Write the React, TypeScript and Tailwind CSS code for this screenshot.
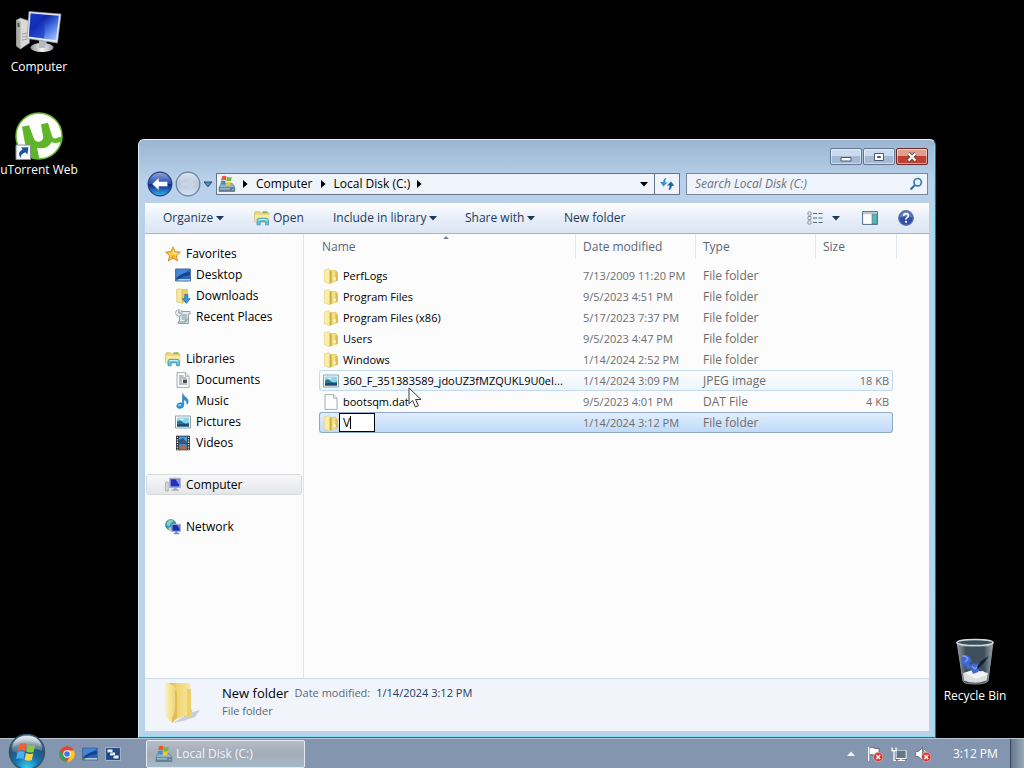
import type { ReactNode } from "react";

/* ---------- Icons ---------- */

function FolderIcon() {
  return (
    <svg viewBox="0 0 16 16" className="size-4" aria-hidden="true">
      <path d="M7 2.5 12.8 1.8 14.8 4.5V12.8L8 15.2Z" fill="#e6cd62" />
      <path d="M8.6 3.2 12.4 2.2V9.4L14.8 10.4V12.8L8.6 15Z" fill="#f3e084" />
      <path d="M12.6 4.2 14.8 5V12.6L12.6 13.4Z" fill="#d8bd58" />
      <path d="M1.2 2 5.4.6 8 2.2V15.4L6.4 15.8 1.4 13.8Z" fill="#f2e18d" />
      <path d="M1.2 2 5.4.6 6.6 2.6V15.8L1.4 13.8Z" fill="#f8edaa" stroke="#dcc671" strokeWidth=".4" />
      <path d="M6.8 2.4V15.6L8.6 15V2.6Z" fill="#cfae40" />
      <path d="M10.6 9.4h2V12h-2Z" fill="#fff8d0" />
    </svg>
  );
}

function BigFolderIcon() {
  return (
    <svg viewBox="0 0 40 44" className="mb-1 h-11 w-10" aria-hidden="true">
      <defs>
        <linearGradient id="bf1" x1="0" x2="1">
          <stop offset="0" stopColor="#fbf1bd" />
          <stop offset="1" stopColor="#eed475" />
        </linearGradient>
        <linearGradient id="bf2" x1="0" x2="1">
          <stop offset="0" stopColor="#d7b342" />
          <stop offset=".4" stopColor="#efd673" />
          <stop offset="1" stopColor="#f7e69a" />
        </linearGradient>
      </defs>
      <path d="M28 32 39 29 34 36 22 40 12 42Z" fill="#c9ced8" />
      <path d="M8 2H27L29 4V33L12 39Z" fill="url(#bf2)" />
      <path d="M26 8H30V28L31 29V35L26 37Z" fill="#ebd06c" />
      <path d="M4 3 6 1 13 5Q15 7 15 11V37L11 42 4 35Z" fill="url(#bf1)" />
      <path d="M14 9 16 11V37L11 42V37Q14 32 14 26Z" fill="#dfbe56" />
    </svg>
  );
}

function LibraryIcon() {
  return (
    <svg viewBox="0 0 16 16" className="size-4" aria-hidden="true">
      <path d="M.7 3 1 1.8H5.5L6.6 3H14.8V12H.7Z" fill="#f0d777" stroke="#c6a744" strokeWidth=".6" />
      <path d="M8.5 1.3h5V3h-5Z" fill="#79b95a" />
      <path d="M1 4.8H15V12H1Z" fill="#f9eaa0" />
      <path d="M3 14.8V10.5Q3 8.3 5 8.3H12Q14.5 8.3 14.5 10.5V14.8H11.5V11.5H6.2V14.8Z" fill="#62c5df" stroke="#318eb9" strokeWidth=".7" />
      <path d="M4 10Q8 8.8 13.5 10" stroke="#d1f4fb" fill="none" />
    </svg>
  );
}

function StarIcon() {
  return (
    <svg viewBox="0 0 16 16" className="size-4" aria-hidden="true">
      <path d="m8 .8 2.1 4.8 5.2.5-3.9 3.5 1.1 5.3L8 12.2 3.4 15l1.2-5.3L.7 6.1l5.2-.5Z" fill="#f9c84c" stroke="#d48324" strokeWidth=".9" />
      <path d="m8 2.4.9 4.3 4.3.2-5 1.5Z" fill="#fff3bd" />
      <path d="M8 8.5 5 13l3-1.8 3 1.8Z" fill="#f2a029" />
    </svg>
  );
}

function DesktopIcon() {
  return (
    <svg viewBox="0 0 16 16" className="size-4" aria-hidden="true">
      <path d="M.6 2h14.8v12H.6Z" fill="#2667bb" stroke="#4a6a94" />
      <path d="M1.2 2.6H15L1.2 11Z" fill="#4585d6" />
      <path d="M1.2 11.5Q6 6 14.8 5V8Q7 9 4 12Z" fill="#173f8f" />
      <path d="M1 12h14v1.6H1Z" fill="#b9cbdb" />
      <path d="M1 12h2.2v1.6H1Z" fill="#3a8c4b" />
    </svg>
  );
}

function DownloadsIcon() {
  return (
    <svg viewBox="0 0 16 16" className="size-4" aria-hidden="true">
      <path d="M1.5 1.5 5.5.7 8 2V15.3L1.8 14Z" fill="#f8e99c" stroke="#cfae4c" strokeWidth=".5" />
      <path d="M7 1.5h5.6V13L7 14.8Z" fill="#e8cd67" stroke="#cfae4c" strokeWidth=".5" />
      <path d="M9.8 6.5h3v4.2h2.4L11.3 15.4 7.4 10.7h2.4Z" fill="#3e96e5" stroke="#1764ad" strokeWidth=".7" />
    </svg>
  );
}

function RecentIcon() {
  return (
    <svg viewBox="0 0 16 16" className="size-4" aria-hidden="true">
      <path d="M4.5 2.5H15V5h-1.5v9.5H3.2Q2.3 12.6 4.5 12Z" fill="#e4ecee" stroke="#7e8b91" strokeWidth=".8" />
      <path d="M6.5 6h5.5M6.5 8h5.5M6.5 10h5.5M3.5 13h8" stroke="#5f8188" strokeWidth=".8" />
      <circle cx="3.8" cy="3.9" r="3.2" fill="#f0f3f4" stroke="#8c989c" strokeWidth=".8" />
      <path d="M3.8 1.8v2.3h2" stroke="#4e5c66" strokeWidth=".7" fill="none" />
      <path d="m9 12 4-3-1 4Z" fill="#71b6ad" />
    </svg>
  );
}

function PageIcon({ plain = false }: { plain?: boolean }) {
  return (
    <svg viewBox="0 0 16 16" className="size-4" aria-hidden="true">
      <path d="M2 .6H10.5L14 4.2V15.4H2Z" fill="#fdfdfd" stroke="#8f979d" strokeWidth=".8" />
      <path d="M10.5.6V4.2H14" fill="#e9edf0" stroke="#8f979d" strokeWidth=".7" />
      {!plain && (
        <>
          <path d="M4 4h4.5M4 6h7.5M4 8h3M4 10h3M4 12h8" stroke="#66747d" strokeWidth=".9" />
          <path d="M8 7.5h4V11H8Z" fill="#45515a" />
        </>
      )}
    </svg>
  );
}

function MusicIcon() {
  return (
    <svg viewBox="0 0 16 16" className="size-4" aria-hidden="true">
      <path d="M7.6.4C8.2 3 12.8 4.5 13.2 8q.1 1.8-1.2 3.5.4-3.6-3.2-5v5.3q0 3-3.5 3.6-3.6.2-3.6-2.4.2-2.8 3.5-3.2 1.2-.1 2.2.4Z" fill="#2a91ce" stroke="#1a6ea9" strokeWidth=".5" />
      <ellipse cx="4.7" cy="12.1" rx="1.8" ry="1.2" fill="#85cdf0" />
    </svg>
  );
}

function PictureIcon() {
  return (
    <svg viewBox="0 0 16 16" className="size-4" aria-hidden="true">
      <path d="M.5 2h15v12H.5Z" fill="#fff" stroke="#87939c" strokeWidth=".9" />
      <path d="M2 3.5h12v9H2Z" fill="#8dd3ea" />
      <path d="M2 7.5Q5 5.5 7.5 8T14 8.5V12.5H2Z" fill="#257b8b" />
      <path d="M2 10.6Q8 9 14 10.3V12.5H2Z" fill="#1c4b75" />
      <path d="M3 4.8h7l-3 1.5Z" fill="#e5f8fc" />
    </svg>
  );
}

function VideoIcon() {
  return (
    <svg viewBox="0 0 16 16" className="size-4" aria-hidden="true">
      <path d="M1 .7h14v14.6H1Z" fill="#202a33" />
      <path d="M4 1.5h8v6H4Z" fill="#579bd3" />
      <path d="M4 8.5h8v6H4Z" fill="#4484c2" />
      <path d="m4 5 4-2 4 4.5H4Z" fill="#2b5b94" />
      <path d="m4 14.5 5-5.4 3 3v2.4Z" fill="#b46a47" />
      <path d="M2.5 1.8v13M13.5 1.8v13" stroke="#e9eef1" strokeWidth="1.5" strokeDasharray="1.3 1.1" />
    </svg>
  );
}

function ComputerSmallIcon() {
  return (
    <svg viewBox="0 0 16 16" className="size-4" aria-hidden="true">
      <path d="M.5 5h2.7v9H.5Z" fill="#d9dcdf" stroke="#8d9297" strokeWidth=".6" />
      <path d="M4.6 1.2h10.8v9.3H4.6Z" fill="#b9c1dd" stroke="#8990ad" strokeWidth=".6" />
      <path d="M5.6 2.2h8.8v7.3H5.6Z" fill="#2330c0" />
      <path d="M10.5 2.2h3.9v6Z" fill="#8d9cf2" />
      <path d="M8.7 10.6h3v2h2v1.2H6.5v-1.2h2.2Z" fill="#a4a9b6" />
    </svg>
  );
}

function NetworkIcon() {
  return (
    <svg viewBox="0 0 16 16" className="size-4" aria-hidden="true">
      <circle cx="5.8" cy="5.8" r="5.3" fill="#3695cb" stroke="#2a7193" strokeWidth=".6" />
      <path d="M1.5 4Q4 0 7.5 1L8 3 5.5 4 5 6.5 2.5 7Z" fill="#8fd6a0" />
      <path d="m3 9 3-1 1 2.7-2.6.2Z" fill="#a6dda0" />
      <path d="M6.6 5.2h9v7.4h-9Z" fill="#c2cbe4" stroke="#7884a4" strokeWidth=".5" />
      <path d="M7.4 6h7.4v5.8H7.4Z" fill="#1730b4" />
      <path d="M12 6h2.8v4.4Z" fill="#6a82eb" />
      <path d="M10.2 12.6h2.4v1.5h1.6v1.2H8.7v-1.2h1.5Z" fill="#5d92bd" />
    </svg>
  );
}

function DriveIcon() {
  return (
    <svg viewBox="0 0 18 18" className="size-[18px]" aria-hidden="true">
      <path d="m2.5 10 1-1.5h10.8l2.5 3.5v4.5H1V12Z" fill="#91b1c0" stroke="#52717f" strokeWidth=".6" />
      <path d="M1 12.3h15.8v4.2H1Z" fill="#5d7f91" />
      <path d="M2 13.3h10v1.2H2Z" fill="#a8c9d7" />
      <path d="M14 14h1.5v1.3H14Z" fill="#72e36f" />
      <path d="M4 1.4Q6.4.2 8.6 1.5L7.9 5.5Q5.6 4.3 3.2 5.3Z" fill="#e8592b" />
      <path d="M9.2 1.8q2.2 1.3 4.6.3l-.8 3.7q-2.3 1-4.5-.1Z" fill="#6dbb3d" />
      <path d="M3 5.9q2.4-1 4.7.2L7 9.9q-2.1-1-4.6-.2Z" fill="#3f91d6" />
      <path d="M8.4 6.5q2.1 1.2 4.5.2l-.8 3.7q-2.2.8-4.4-.2Z" fill="#f6c62e" />
    </svg>
  );
}

function SmallArrow({ dir = "down" }: { dir?: "down" | "right" }) {
  return dir === "down" ? (
    <svg viewBox="0 0 8 5" className="h-[5px] w-2 shrink-0" aria-hidden="true">
      <path d="M0 0h8L4 4.6Z" fill="currentColor" />
    </svg>
  ) : (
    <svg viewBox="0 0 5 8" className="h-2 w-[5px] shrink-0" aria-hidden="true">
      <path d="M0 0v8l4.6-4Z" fill="currentColor" />
    </svg>
  );
}

function DesktopComputer() {
  return (
    <svg viewBox="0 0 48 48" className="size-12" aria-hidden="true">
      <defs>
        <linearGradient id="scr" x1="0" y1="0" x2=".9" y2="1">
          <stop offset="0" stopColor="#164fd5" />
          <stop offset=".35" stopColor="#1225a9" />
          <stop offset=".6" stopColor="#3a66dd" />
          <stop offset="1" stopColor="#a9c6ff" />
        </linearGradient>
        <linearGradient id="stand" x1="0" x2="1">
          <stop offset="0" stopColor="#8e9297" />
          <stop offset=".5" stopColor="#f3f4f5" />
          <stop offset="1" stopColor="#999da3" />
        </linearGradient>
      </defs>
      <path d="m1.5 11 4-2 9 3v22l-9 6-4-3Z" fill="#d9dad7" stroke="#84877f" strokeWidth=".7" />
      <path d="m1.5 11 4 1v28l-4-3Z" fill="#aaada8" />
      <path d="M2.5 14h2v4h-2Z" fill="#4e5352" />
      <path d="m7 25 5-1m-5 4 5-1m-5 4 5-1" stroke="#888" strokeWidth=".7" />
      <ellipse cx="27" cy="38.5" rx="11.5" ry="4.5" fill="url(#stand)" />
      <path d="m24 31 8 1-2 7h-6Z" fill="#b6bac0" />
      <path d="M14 2.5 46 5 42.5 34 12 29.5Z" fill="#e5e8ee" stroke="#8b929e" strokeWidth=".7" />
      <path d="M15.7 4.5 43.9 6.7 41 31.3 13.9 27.5Z" fill="url(#scr)" />
      <path d="M15.7 4.5 26 5.3Q31 16 29 29.5L13.9 27.5Z" fill="#1430be" opacity=".6" />
    </svg>
  );
}

function UTorrentIcon() {
  return (
    <svg viewBox="0 0 48 48" className="size-12" aria-hidden="true">
      <circle cx="24" cy="24" r="23" fill="#fff" stroke="#69b92e" strokeWidth="1.5" />
      <path d="M7 14.8 14 13.2 19 27Q21 31 25 29.4 29.5 27.7 27.7 22.5L26 12.3 33 10.7 37 24Q38.3 27.5 42 26L45.5 24.5 47 29Q42 32.3 36.5 30.2 33 36.5 26 36.3L22 35.7 24.5 47Q17 47 12.2 43.5Z" fill="#5db527" />
      <path d="M1 33h14.5v14.5H1Z" fill="#f8f9fb" stroke="#8a949b" />
      <path d="M5.5 46.2Q1.6 40.5 7.6 37.6L6 35.4 13.4 35.2 12.4 42.4 10.4 40.2Q5.6 41.6 5.5 46.2Z" fill="#15559c" />
    </svg>
  );
}

function RecycleBinIcon() {
  return (
    <svg viewBox="0 0 40 48" className="h-12 w-10" aria-hidden="true">
      <defs>
        <linearGradient id="glass" x1="0" x2="1">
          <stop offset="0" stopColor="#b7c4cc" stopOpacity=".8" />
          <stop offset=".25" stopColor="#4d626f" stopOpacity=".8" />
          <stop offset=".75" stopColor="#506370" stopOpacity=".8" />
          <stop offset="1" stopColor="#c8d4da" stopOpacity=".8" />
        </linearGradient>
      </defs>
      <path d="M2 4H38L33 43Q31 46 20 46T8 43Z" fill="url(#glass)" stroke="#87949b" />
      <ellipse cx="20" cy="4.5" rx="18" ry="3.1" fill="#3d4e58" stroke="#d4dfe2" strokeWidth="1.5" />
      <path d="M8 35Q20 30 33 35L31.5 42.5Q20 47 9 42.5Z" fill="#d9dddc" />
      <path d="m10 35 7-3 5 3 6-2 4 4-11 4Z" fill="#f1f3f2" />
      <path d="M6 20q5-5 9-1l2 5-3 1 3 4-4 3-4-6-2 1ZM15 29l3-4 3 1 3-1 1 4-2 5-5 2Z" fill="#4168d0" />
      <path d="M7 18q4-1 6 3l-3 3M17 28l3 3 3-3" stroke="#83a3f2" strokeWidth="1.2" fill="none" />
      <path d="m22 29 4-6 8-5-6 8-5 5Z" fill="#101d38" />
      <path d="M6 8h28" stroke="#c7d6dd" opacity=".4" />
    </svg>
  );
}

function StartOrb() {
  return (
    <svg viewBox="0 0 38 38" className="size-[38px]" aria-hidden="true">
      <defs>
        <radialGradient id="orb" cx=".5" cy=".95" r=".9">
          <stop offset="0" stopColor="#35d0f2" />
          <stop offset=".4" stopColor="#1672ad" />
          <stop offset=".75" stopColor="#285070" />
          <stop offset="1" stopColor="#a5b7c4" />
        </radialGradient>
        <linearGradient id="shine" x1="0" x2="0" y1="0" y2="1">
          <stop offset="0" stopColor="#fff" stopOpacity=".75" />
          <stop offset="1" stopColor="#fff" stopOpacity=".1" />
        </linearGradient>
      </defs>
      <circle cx="19" cy="19" r="17.5" fill="url(#orb)" stroke="#34536e" strokeWidth="1.5" />
      <path d="M4 18Q4 3 19 3t15 15Q26 14 19 18T4 18Z" fill="url(#shine)" />
      <path d="M11.5 10.8q3.8-2 7.1.4l-1.5 7q-3.6-2-7.3-.3Z" fill="#ed6133" />
      <path d="M19.8 11.6q3.7 2 7.3.2l-1.5 7.1q-3.6 1.6-7.3-.4Z" fill="#8bca3c" />
      <path d="M9.6 19.1q3.7-1.9 7.2.4l-1.5 6.8q-3.5-2-7.2-.3Z" fill="#4ab1ec" />
      <path d="M18 20q3.5 2 7.3.4l-1.5 6.7q-3.6 1.7-7.2-.4Z" fill="#fad443" />
    </svg>
  );
}

function ChromeIcon() {
  return (
    <svg viewBox="0 0 16 16" className="size-4" aria-hidden="true">
      <circle cx="8" cy="8" r="7.8" fill="#e2443a" />
      <path d="M1.2 4.2 5 10l2.8 5.8A7.8 7.8 0 0 1 1.2 4.2Z" fill="#32a350" />
      <path d="M8 4.5h7A7.8 7.8 0 0 1 7.8 15.8L11.2 10Z" fill="#fbcb2c" />
      <circle cx="8" cy="8" r="3.7" fill="#fff" />
      <circle cx="8" cy="8" r="2.8" fill="#3978df" />
    </svg>
  );
}

function SwitchIcon() {
  return (
    <svg viewBox="0 0 16 16" className="size-4" aria-hidden="true">
      <path d="M.6 1.6h14.8v12.8H.6Z" fill="#214b87" stroke="#d9e5f1" strokeWidth=".6" />
      <path d="M2 3.5h6V7H2ZM4.5 6.5h6V10h-6ZM8 9.5h6V13H8Z" fill="#dceaf8" stroke="#153662" strokeWidth=".8" />
      <path d="M2.5 4h5M5 7h5M8.5 10h5" stroke="#fff" />
    </svg>
  );
}

function ErrorBadge() {
  return (
    <>
      <circle cx="11.2" cy="11" r="4.7" fill="#d83a32" stroke="#f0c2be" strokeWidth=".6" />
      <path d="m9.3 9.1 3.8 3.8m0-3.8-3.8 3.8" stroke="#fff" strokeWidth="1.4" />
    </>
  );
}

/* ---------- Data ---------- */

type NavItem = { label: string; icon: ReactNode };
type NavGroup = NavItem & { children: NavItem[]; current?: boolean };

const groups: NavGroup[] = [
  {
    label: "Favorites",
    icon: <StarIcon />,
    children: [
      { label: "Desktop", icon: <DesktopIcon /> },
      { label: "Downloads", icon: <DownloadsIcon /> },
      { label: "Recent Places", icon: <RecentIcon /> },
    ],
  },
  {
    label: "Libraries",
    icon: <LibraryIcon />,
    children: [
      { label: "Documents", icon: <PageIcon /> },
      { label: "Music", icon: <MusicIcon /> },
      { label: "Pictures", icon: <PictureIcon /> },
      { label: "Videos", icon: <VideoIcon /> },
    ],
  },
  { label: "Computer", icon: <ComputerSmallIcon />, children: [], current: true },
  { label: "Network", icon: <NetworkIcon />, children: [] },
];

type FileRow = {
  name: string;
  date: string;
  type: string;
  size?: string;
  icon: ReactNode;
  state?: "hover" | "editing";
};

const files: FileRow[] = [
  { name: "PerfLogs", date: "7/13/2009 11:20 PM", type: "File folder", icon: <FolderIcon /> },
  { name: "Program Files", date: "9/5/2023 4:51 PM", type: "File folder", icon: <FolderIcon /> },
  { name: "Program Files (x86)", date: "5/17/2023 7:37 PM", type: "File folder", icon: <FolderIcon /> },
  { name: "Users", date: "9/5/2023 4:47 PM", type: "File folder", icon: <FolderIcon /> },
  { name: "Windows", date: "1/14/2024 2:52 PM", type: "File folder", icon: <FolderIcon /> },
  { name: "360_F_351383589_jdoUZ3fMZQUKL9U0eI...", date: "1/14/2024 3:09 PM", type: "JPEG image", size: "18 KB", icon: <PictureIcon />, state: "hover" },
  { name: "bootsqm.dat", date: "9/5/2023 4:01 PM", type: "DAT File", size: "4 KB", icon: <PageIcon plain /> },
  { name: "V", date: "1/14/2024 3:12 PM", type: "File folder", icon: <FolderIcon />, state: "editing" },
];

/* ---------- Window parts ---------- */

function CaptionButtons() {
  const plain = "border-[#5f7592] bg-linear-to-b from-[#cbdaec] from-50% to-[#a3bad6] to-50%";
  const base = "flex h-[17px] w-8 items-center justify-center rounded-[2px] border shadow-[inset_0_0_0_1px_rgba(255,255,255,0.5)]";
  return (
    <div className="flex gap-px">
      <button aria-label="Minimize" className={`${base} ${plain}`}>
        <svg viewBox="0 0 12 10" className="h-2.5 w-3"><path d="M1 5.5h10v3.5H1Z" fill="#fff" stroke="#4d5a6d" /></svg>
      </button>
      <button aria-label="Restore" className={`${base} ${plain}`}>
        <svg viewBox="0 0 12 10" className="h-2.5 w-3"><path d="M1.5 1.5h9v7h-9Z" fill="#fff" stroke="#4d5a6d" /><path d="M4.5 4.5h3v1h-3Z" fill="#b8c9dd" stroke="#4d5a6d" /></svg>
      </button>
      <button aria-label="Close" className={`${base} border-[#6b2a28] bg-linear-to-b from-[#e0a08f] from-45% to-[#bd4030] to-50%`}>
        <svg viewBox="0 0 12 10" className="h-2.5 w-3"><path d="m2.5 1.5 7 7m0-7-7 7" stroke="#63434a" strokeWidth="4" /><path d="m2.5 1.5 7 7m0-7-7 7" stroke="#fff" strokeWidth="2.2" /></svg>
      </button>
    </div>
  );
}

function NavigationBar() {
  return (
    <div className="flex h-[26px] items-center pr-px pl-[2px]">
      <button aria-label="Back">
        <svg viewBox="0 0 26 26" className="size-[26px]">
          <defs>
            <linearGradient id="back" x1="0" x2="0" y1="0" y2="1">
              <stop offset="0" stopColor="#8ea7dc" />
              <stop offset=".48" stopColor="#2d4fae" />
              <stop offset=".5" stopColor="#0a2388" />
              <stop offset="1" stopColor="#36b4ee" />
            </linearGradient>
          </defs>
          <circle cx="13" cy="13" r="11.8" fill="url(#back)" stroke="#24417e" strokeWidth="1.3" />
          <path d="m5 13 7-6.4v3.9h8.6v5H12v3.9Z" fill="#fff" stroke="#3c599a" strokeWidth=".5" />
        </svg>
      </button>
      <button aria-label="Forward" className="ml-[2px]">
        <svg viewBox="0 0 26 26" className="size-[26px]">
          <defs>
            <linearGradient id="fwd" x1="0" x2="0" y1="0" y2="1">
              <stop offset="0" stopColor="#dce5ee" />
              <stop offset=".5" stopColor="#b7c8dc" />
              <stop offset="1" stopColor="#d4e5f5" />
            </linearGradient>
          </defs>
          <circle cx="13" cy="13" r="11.8" fill="url(#fwd)" stroke="#687e99" strokeWidth="1.2" />
          <path d="m21 13-7-6v3.8H6v4.4h8V19Z" fill="#c7d4e2" />
        </svg>
      </button>
      <button aria-label="Recent pages" className="ml-px flex w-[11px] justify-center">
        <svg viewBox="0 0 10 7" className="h-[7px] w-2.5"><path d="M1 1h8L5 5.8Z" fill="#4c8fbe" stroke="#264c74" /></svg>
      </button>
      <div className="ml-[3px] flex h-[22px] min-w-0 flex-1 border border-[#65758a] bg-[#eff3fb] text-black">
        <div className="flex min-w-0 flex-1 items-center pl-px">
          <DriveIcon />
          <span className="ml-[7px]"><SmallArrow dir="right" /></span>
          <button className="ml-2">Computer</button>
          <span className="ml-2"><SmallArrow dir="right" /></span>
          <button className="ml-2">Local Disk (C:)</button>
          <span className="ml-[7px]"><SmallArrow dir="right" /></span>
          <button aria-label="Previous locations" className="mr-1.5 ml-auto"><SmallArrow /></button>
        </div>
        <button aria-label="Refresh" className="flex w-[25px] items-center justify-center border-l border-[#65758a]">
          <svg viewBox="0 0 16 14" className="h-3.5 w-4">
            <path d="M7.4 1Q4.6 1.2 4.2 5H1.2L4.4 9.6 8.6 5.6H6.2Q6.2 2.6 7.4 1Z" fill="#3f8dc6" />
            <path d="M9.6 13.2q2.9-.4 3.2-4.4h2.6L12 4.4 8 8.4h2.4q.2 3-.8 4.8Z" fill="#23649d" />
          </svg>
        </button>
      </div>
      <div className="ml-1.5 flex h-[22px] w-[242px] items-center border border-[#77899f] bg-[#eff3fb] pr-1">
        <input aria-label="Search Local Disk (C:)" placeholder="Search Local Disk (C:)" className="min-w-0 flex-1 bg-transparent pl-2 text-[12px] italic outline-none placeholder:text-[#6d717b]" />
        <svg viewBox="0 0 14 14" className="size-3.5" aria-hidden="true">
          <path d="m1.5 12.5 5-5" stroke="#366ea0" strokeWidth="2.2" />
          <circle cx="8.7" cy="5.2" r="3.7" fill="#e7f3fb" stroke="#3b79b2" strokeWidth="1.7" />
        </svg>
      </div>
    </div>
  );
}

function Toolbar() {
  return (
    <div className="flex h-[31px] items-center border-b border-[#a6b3c7] bg-linear-to-b from-[#fdfeff] via-[#e8eff9] via-50% to-[#dbe5f3] pr-[15px] pl-[18px] text-[#1e395b]">
      <button className="flex w-[91px] items-center gap-[3px]">Organize <SmallArrow /></button>
      <button className="flex w-[79px] items-center gap-[3px]"><LibraryIcon />Open</button>
      <button className="flex w-[132px] items-center gap-[3px]">Include in library <SmallArrow /></button>
      <button className="flex w-[99px] items-center gap-[3px]">Share with <SmallArrow /></button>
      <button>New folder</button>
      <button aria-label="Change your view" className="ml-auto">
        <svg viewBox="0 0 16 14" className="h-3.5 w-4">
          <path d="M1 1h3v3H1ZM1 5.5h3v3H1ZM1 10h3v3H1Z" fill="#fff" stroke="#6c7e90" strokeWidth=".8" />
          <path d="M6 2.5h4M6 7h4M6 11.5h4M11.5 2.5h4M11.5 7h4M11.5 11.5h4" stroke="#52687c" strokeWidth="1.1" />
        </svg>
      </button>
      <button aria-label="View options" className="ml-[9px]"><SmallArrow /></button>
      <button aria-label="Preview pane" className="ml-[22px]">
        <svg viewBox="0 0 16 14" className="h-3.5 w-4">
          <path d="M.6.6h14.8v12.8H.6Z" fill="#fff" stroke="#4f6f83" />
          <path d="M1 1h14v2.3H1Z" fill="#b9cad7" />
          <path d="M10 3.3h5V13h-5Z" fill="#59b8b5" stroke="#4f6f83" strokeWidth=".6" />
        </svg>
      </button>
      <button aria-label="Help" className="ml-5">
        <svg viewBox="0 0 16 16" className="size-4">
          <circle cx="8" cy="8" r="7.4" fill="#304fab" stroke="#6b7fae" strokeWidth="1.1" />
          <path d="M2 7.5a6 6 0 0 1 12 0Q8 5.5 2 7.5Z" fill="#8296d4" opacity=".7" />
          <path d="M5.7 6Q5.8 3.7 8 3.7q2.3.1 2.3 2 0 1.3-1.3 2T8 9.5" stroke="#fff" strokeWidth="1.7" fill="none" />
          <circle cx="8" cy="11.8" r="1.1" fill="#fff" />
        </svg>
      </button>
    </div>
  );
}

function NavigationPane() {
  return (
    <nav aria-label="Places" className="w-[159px] shrink-0 border-r border-[#dbe4f0] pt-[9px]">
      <ul className="flex flex-col gap-[21px]">
        {groups.map((g) => (
          <li key={g.label}>
            <a
              href="#"
              className={
                g.current
                  ? "mx-px flex h-[21px] items-center gap-[5px] rounded-[3px] border border-[#d5dade] bg-linear-to-b from-[#f8f8f9] to-[#e5e6e8] pl-[18px]"
                  : "mx-px flex h-[21px] items-center gap-[5px] pl-[19px]"
              }
            >
              {g.icon}
              {g.label}
            </a>
            {g.children.map((c) => (
              <a key={c.label} href="#" className="flex h-[21px] items-center gap-[5px] pl-[30px]">
                {c.icon}
                {c.label}
              </a>
            ))}
          </li>
        ))}
      </ul>
    </nav>
  );
}

function cellStyle(state: FileRow["state"]) {
  if (state === "hover") return "border-y border-[#c3dbee] bg-linear-to-b from-[#fbfdff] to-[#ecf4fb] first:border-l last:border-r first:rounded-l-[3px] last:rounded-r-[3px]";
  if (state === "editing") return "border-y border-[#8fa9cb] bg-linear-to-b from-[#e2eefd] to-[#c0daf9] first:border-l last:border-r first:rounded-l-[3px] last:rounded-r-[3px]";
  return "border-y border-transparent first:border-l last:border-r";
}

function FileList() {
  return (
    <div className="min-w-0 flex-1 pl-[15px]">
      <table className="w-[574px] table-fixed border-separate border-spacing-0 text-left">
        <colgroup>
          <col className="w-[257px]" />
          <col className="w-[120px]" />
          <col className="w-[120px]" />
          <col />
        </colgroup>
        <thead className="text-[#5b6676]">
          <tr className="h-[31px] align-top">
            <th className="relative p-0 font-normal">
              <div className="flex h-[25px] items-center border-r border-[#e3e8ee] pl-[3px]">Name</div>
              <svg viewBox="0 0 8 4" className="absolute top-px left-[123px] h-1 w-2" aria-label="Sorted ascending"><path d="M1 4 4 1l3 3Z" fill="#78879b" /></svg>
            </th>
            <th className="p-0 font-normal"><div className="flex h-[25px] items-center border-r border-[#e3e8ee] pl-[7px]">Date modified</div></th>
            <th className="p-0 font-normal"><div className="flex h-[25px] items-center border-r border-[#e3e8ee] pl-[7px]">Type</div></th>
            <th className="p-0 font-normal"><div className="-mr-1 flex h-[25px] items-center border-r border-[#e3e8ee] pl-[7px]">Size</div></th>
          </tr>
        </thead>
        <tbody className="text-[#6d6d6d]">
          {files.map((f) => (
            <tr key={f.name} className="h-[21px]">
              <td className={`p-0 text-[11px] text-black ${cellStyle(f.state)}`}>
                <div className="flex h-[19px] items-center pl-[3px]">
                  {f.icon}
                  {f.state === "editing" ? (
                    <div className="relative">
                      <input aria-label="Folder name" defaultValue={f.name} className="block h-[19px] w-9 border border-black bg-white pl-[3px] text-[12px] outline-none" />
                      <span className="absolute top-[3px] left-[11px] h-[13px] w-px bg-black" />
                    </div>
                  ) : (
                    <span className="ml-1 whitespace-nowrap">{f.name}</span>
                  )}
                </div>
              </td>
              <td className={`p-0 pl-[7px] text-[11px] whitespace-nowrap ${cellStyle(f.state)}`}>{f.date}</td>
              <td className={`p-0 pl-[7px] whitespace-nowrap ${cellStyle(f.state)}`}>{f.type}</td>
              <td className={`p-0 pr-[3px] text-right text-[11px] whitespace-nowrap ${cellStyle(f.state)}`}>{f.size}</td>
            </tr>
          ))}
        </tbody>
      </table>
    </div>
  );
}

function ExplorerWindow() {
  return (
    <section
      aria-label="Local Disk (C:)"
      className="absolute top-[139px] right-[88px] bottom-[30px] left-[138px] flex flex-col rounded-t-[6px] border border-[#4f5f70] border-t-[#e8f5fd] border-l-[#dceefa] bg-linear-to-b from-[#9bb5d1] via-[#b9d1ea] via-[40px] to-[#b7d3ea] px-1.5 pb-1.5 shadow-[inset_-1px_0_0_#8ddcf7,inset_0_-1px_0_#8ddcf7]"
    >
      <header className="flex h-[31px] justify-end pt-2 pr-px">
        <CaptionButtons />
      </header>
      <div className="mb-1.5"><NavigationBar /></div>
      <Toolbar />
      <div className="flex min-h-0 flex-1 bg-[#fcfcfd] text-black">
        <NavigationPane />
        <FileList />
      </div>
      <footer className="flex h-[53px] items-center border-t border-[#d0dae7] bg-[#f1f5fb] pl-4">
        <BigFolderIcon />
        <div className="mb-1.5 ml-[21px] leading-[18px] text-[#5a6779]">
          <div className="flex gap-1.5">
            <span className="text-[13px] text-black">New folder</span>
            <span className="text-[11px]">Date modified:</span>
            <span className="text-[11px] text-[#1e395b]">1/14/2024 3:12 PM</span>
          </div>
          <div className="text-[11px]">File folder</div>
        </div>
      </footer>
    </section>
  );
}

function Taskbar() {
  return (
    <footer className="absolute inset-x-0 bottom-0 flex h-[30px] items-center border-t border-[#b9c7d7] bg-[#8495af] text-white">
      <button aria-label="Start" className="mb-1 ml-2"><StartOrb /></button>
      <div className="ml-[13px] flex gap-[7px]">
        <button aria-label="Google Chrome"><ChromeIcon /></button>
        <button aria-label="Show desktop"><DesktopIcon /></button>
        <button aria-label="Switch between windows"><SwitchIcon /></button>
      </div>
      <button className="ml-[25px] flex h-[28px] w-[159px] items-center gap-[3px] rounded-[2px] border border-[#e3e9ef] bg-linear-to-b from-[#b6bdc7] via-[#a3abb7] to-[#a6b9c8] pl-2 text-[#f2f5f8]">
        <DriveIcon />
        Local Disk (C:)
      </button>
      <div className="ml-auto flex h-full items-center">
        <button aria-label="Show hidden icons">
          <svg viewBox="0 0 8 5" className="h-[5px] w-2"><path d="M0 5 4 .4 8 5Z" fill="#f3f6f9" /></svg>
        </button>
        <div className="ml-3 flex gap-2">
          <button aria-label="Action Center">
            <svg viewBox="0 0 16 16" className="size-4">
              <path d="M2 1v14M2 2q3-1.5 5 0t5 0v7q-3 1-5 0T2 9Z" fill="#fff" stroke="#3d4958" strokeWidth=".7" />
              <path d="M1.7 1v14" stroke="#fff" strokeWidth="1.3" />
              <ErrorBadge />
            </svg>
          </button>
          <button aria-label="Network">
            <svg viewBox="0 0 16 16" className="size-4">
              <path d="M5 4h10.2v8.5H5Z" fill="#667b8b" stroke="#2b3541" strokeWidth="2.2" />
              <path d="M5 4h10.2v8.5H5Z" fill="#61788a" stroke="#fff" strokeWidth="1.1" />
              <path d="M7 14.4h7M10 12.5v2M1 1.5v3.2h4V1.5M3 4.7v9.7h2" stroke="#fff" strokeWidth="1.3" fill="none" />
            </svg>
          </button>
          <button aria-label="Volume muted">
            <svg viewBox="0 0 16 16" className="size-4">
              <path d="M.7 5.5H3.5L7.5 1.4v13L3.5 10.5H.7Z" fill="#fff" stroke="#4d5967" strokeWidth=".7" />
              <path d="M9.4 4q2 3 .5 7" stroke="#fff" fill="none" />
              <ErrorBadge />
            </svg>
          </button>
        </div>
        <time className="ml-[22px] w-[57px]">3:12 PM</time>
        <button aria-label="Peek at desktop" className="h-full w-3.5 border-l border-[#39495c] bg-linear-to-r from-[#66778d] to-[#99aabb]" />
      </div>
    </footer>
  );
}

function DesktopShortcut({ label, position, children }: { label: string; position: string; children: ReactNode }) {
  return (
    <button className={`absolute flex w-20 flex-col items-center gap-0.5 text-white ${position}`}>
      {children}
      <span className="whitespace-nowrap">{label}</span>
    </button>
  );
}

export default function App() {
  return (
    <main className="relative min-h-screen overflow-hidden bg-black font-['Open_Sans','Noto_Sans',sans-serif] text-[12px] leading-4">
      <DesktopShortcut label="Computer" position="top-[9px] left-[-1px]"><DesktopComputer /></DesktopShortcut>
      <DesktopShortcut label="uTorrent Web" position="top-[112px] left-[-1px]"><UTorrentIcon /></DesktopShortcut>
      <DesktopShortcut label="Recycle Bin" position="right-[9px] bottom-[64px]"><RecycleBinIcon /></DesktopShortcut>
      <ExplorerWindow />
      <Taskbar />
      <svg viewBox="0 0 14 22" className="pointer-events-none absolute top-[387px] left-[408px] h-[22px] w-3.5" aria-hidden="true">
        <path d="M1 1v16l3.7-3.5L7.4 20l3-1.2-2.8-6.3H13Z" fill="#fff" stroke="#3b3b3f" />
      </svg>
    </main>
  );
}
